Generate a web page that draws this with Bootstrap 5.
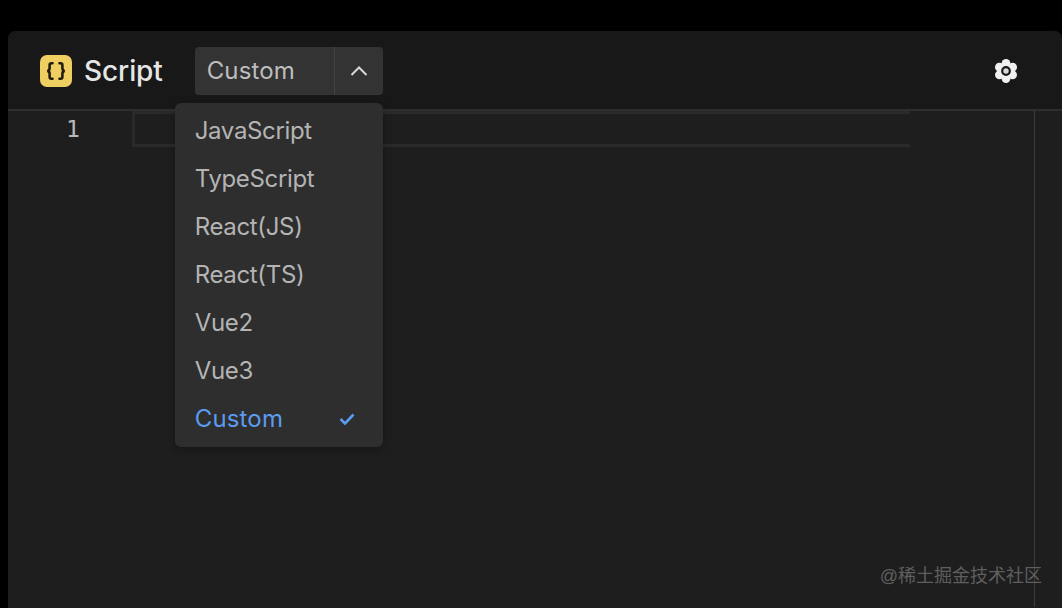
<!DOCTYPE html>
<html lang="en"><head><meta charset="utf-8"><title>Script</title>
<link href="https://cdn.jsdelivr.net/npm/bootstrap@5.3.0/dist/css/bootstrap.min.css" rel="stylesheet">
<style>
html,body{height:100%;}
body{background:#000;font-family:Inter,"Noto Sans CJK SC",sans-serif;overflow:hidden;padding:31px 0 0 8px;}
.shell{height:577px;background:#1e1e1e;border-radius:8px 8px 0 0;overflow:hidden;}
.topbar{height:80px;background:#181818;border-bottom:2px solid #2e2e2e;padding:1px 44px 0 32px;}
.logo{width:32px;height:32px;background:#eecf5f;border-radius:7px;}
.title{font-size:28px;font-weight:500;color:#e6e6e6;margin-left:12px;line-height:32px;letter-spacing:-.1px;}
.picker{position:relative;margin-left:32px;}
.pick-btn{width:188px;height:48px;background:#333;border-radius:4px;color:#bdbdbd;font-size:24px;overflow:hidden;letter-spacing:.1px;}
.pick-val{width:140px;padding-left:12px;height:100%;border-right:1px solid #444;}
.pick-arrow{flex:1;height:100%;}
.menu-pop{position:absolute;top:56px;right:0;width:208px;background:#2e2e2e;border-radius:6px;padding:4px 0;z-index:5;box-shadow:0 2px 8px rgba(0,0,0,.3);}
.menu-row{height:48px;padding:0 28px 0 20px;color:#b4b4b4;font-size:24px;letter-spacing:-.35px;}
.menu-row.on{color:#5b9bf0;letter-spacing:.15px;}
.codearea{position:relative;height:496px;}
.gutter-num{position:absolute;left:58px;top:4px;color:#b8b8b8;font-family:"DejaVu Sans Mono",monospace;font-size:23px;line-height:28px;}
.curline{position:absolute;left:124px;top:0;width:778px;height:36px;border:3px solid #2a2a2a;border-right-width:0;}
.rule{position:absolute;left:1026px;top:0;bottom:0;width:1px;background:#3e3e3e;}
.mark-text{position:absolute;right:20px;bottom:19px;font-size:18px;line-height:24px;color:#5f5f5f;font-family:"Liberation Sans","Noto Sans CJK SC",sans-serif;}
</style></head>
<body>
<div class="shell">
  <div class="topbar d-flex align-items-center">
    <div class="logo d-flex align-items-center justify-content-center">
      <svg width="20" height="18" viewBox="0 0 20 18" fill="none" stroke="#221d10" stroke-width="2.600" stroke-linecap="round"><path d="M6.500 1.300H5.500C4 1.300 3.600 2 3.600 3.200V6.600C3.600 7.900 3 8.600 1.400 9 3 9.400 3.600 10.100 3.600 11.400V14.800C3.600 16 4 16.700 5.500 16.700H6.500"/><path d="M13.500 1.300H14.500C16 1.300 16.400 2 16.400 3.200V6.600C16.400 7.900 17 8.600 18.600 9 17 9.400 16.400 10.100 16.400 11.400V14.800C16.400 16 16 16.700 14.500 16.700H13.500"/></svg>
    </div>
    <div class="title">Script</div>
    <div class="picker">
      <div class="pick-btn d-flex align-items-center">
        <div class="pick-val d-flex align-items-center">Custom</div>
        <div class="pick-arrow d-flex align-items-center justify-content-center">
          <svg width="18" height="10" viewBox="0 0 18 10" fill="none" stroke="#d8d8d8" stroke-width="2"><path d="M1.500 9 9 1.500 16.500 9"/></svg>
        </div>
      </div>
      <div class="menu-pop">
        <div class="menu-row d-flex align-items-center">JavaScript</div>
        <div class="menu-row d-flex align-items-center">TypeScript</div>
        <div class="menu-row d-flex align-items-center">React(JS)</div>
        <div class="menu-row d-flex align-items-center">React(TS)</div>
        <div class="menu-row d-flex align-items-center">Vue2</div>
        <div class="menu-row d-flex align-items-center">Vue3</div>
        <div class="menu-row on d-flex align-items-center justify-content-between">Custom
          <svg width="16" height="12" viewBox="0 0 16 12" fill="none" stroke="#5b9bf0" stroke-width="2.600"><path d="M1.500 6 6 10.500 14.500 1.500"/></svg>
        </div>
      </div>
    </div>
    <div class="ms-auto d-flex">
      <svg width="24" height="24" viewBox="-12 -12 24 24">
        <g fill="#f0f0f0"><circle r="8.500"/><circle cy="-7.600" r="4.400"/><circle cy="7.600" r="4.400"/><circle cx="6.600" cy="-3.800" r="4.400"/><circle cx="-6.600" cy="-3.800" r="4.400"/><circle cx="6.600" cy="3.800" r="4.400"/><circle cx="-6.600" cy="3.800" r="4.400"/></g>
        <circle r="3.800" fill="#d8d8d8" stroke="#181818" stroke-width="2.200"/>
      </svg>
    </div>
  </div>
  <div class="codearea">
    <div class="gutter-num">1</div>
    <div class="curline"></div>
    <div class="rule"></div>
    <div class="mark-text">@稀土掘金技术社区</div>
  </div>
</div>
<script src="https://cdn.jsdelivr.net/npm/bootstrap@5.3.0/dist/js/bootstrap.bundle.min.js"></script>
</body></html>
